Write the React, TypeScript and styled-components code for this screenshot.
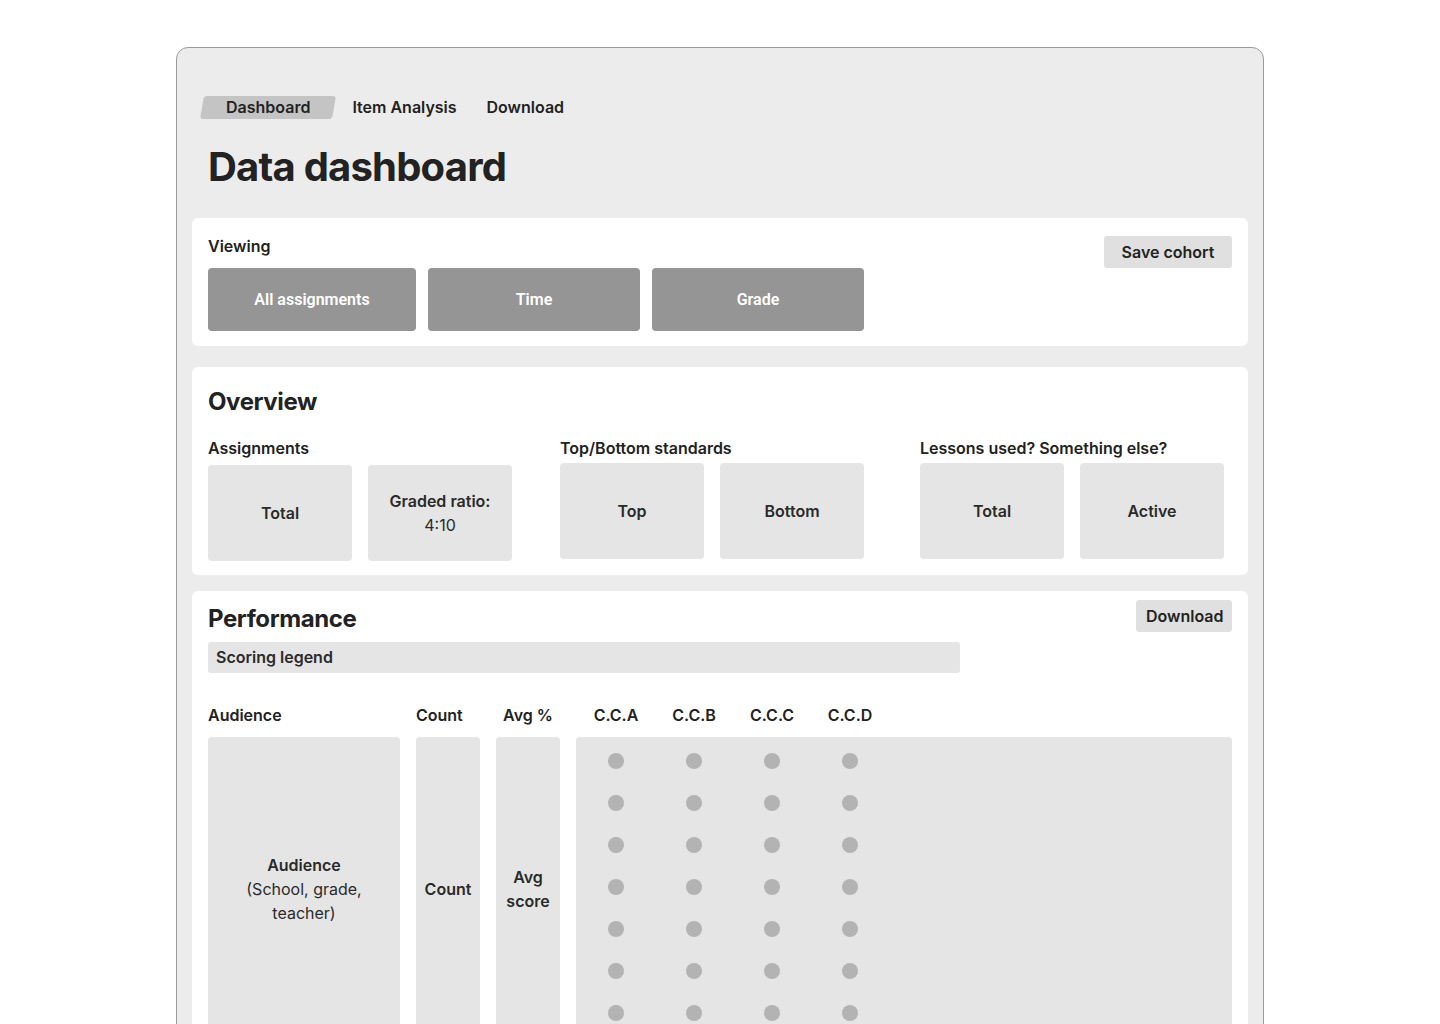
import React from 'react';
import styled, { createGlobalStyle } from 'styled-components';

const GlobalStyle = createGlobalStyle`
  * { box-sizing: border-box; }
  body {
    margin: 0;
    background: #fff;
    font-family: Inter, "Noto Sans", sans-serif;
    color: #222;
  }
`;

const Frame = styled.div`
  width: 1088px;
  margin: 47px auto 0;
  padding: 48px 15px 24px;
  background: #ececec;
  border: 1px solid #9a9a9a;
  border-radius: 12px;
`;

const Tabs = styled.nav`
  display: flex;
  align-items: center;
  gap: 6px;
  padding-left: 10px;
`;

const Tab = styled.div<{ $active?: boolean }>`
  position: relative;
  height: 23px;
  line-height: 23px;
  padding: 0 ${p => (p.$active ? '24px' : '12px')};
  font-size: 16px;
  font-weight: 600;
  color: #222;

  &::before {
    content: '';
    position: absolute;
    inset: 0;
    background: ${p => (p.$active ? '#c4c4c4' : 'transparent')};
    border-radius: 3px;
    transform: skewX(-10deg);
    z-index: 0;
  }

  span {
    position: relative;
  }
`;

const Title = styled.h1`
  margin: 24px 0 27px 16px;
  font-size: 40px;
  line-height: 48px;
  font-weight: 700;
  letter-spacing: -0.8px;
  color: #222;
`;

const Card = styled.section<{ $pad: string }>`
  background: #fff;
  border-radius: 6px;
  padding: ${p => p.$pad};
  & + & {
    margin-top: 16px;
  }
`;

const ViewingCard = styled(Card)`
  display: flex;
  justify-content: space-between;
  align-items: flex-start;
  margin-bottom: 21px;
`;

const Label = styled.div`
  font-size: 16px;
  line-height: 20px;
  font-weight: 600;
  color: #222;
`;

const FilterRow = styled.div`
  display: flex;
  gap: 12px;
  margin-top: 12px;
`;

const FilterButton = styled.button<{ $w: number }>`
  width: ${p => p.$w}px;
  height: 63px;
  border: none;
  border-radius: 4px;
  background: #959595;
  color: #fff;
  font-family: Roboto, "Noto Sans", sans-serif;
  font-size: 16px;
  font-weight: 600;
`;

const GrayButton = styled.button<{ $w?: number }>`
  width: ${p => (p.$w ? `${p.$w}px` : 'auto')};
  height: 32px;
  padding: 0 10px;
  border: none;
  border-radius: 3px;
  background: #e0e0e0;
  color: #222;
  font-family: Inter, sans-serif;
  font-size: 16px;
  font-weight: 600;
`;

const SectionTitle = styled.h2`
  margin: 0;
  font-size: 24px;
  line-height: 30px;
  font-weight: 700;
  letter-spacing: -0.4px;
  color: #222;
`;

const Groups = styled.div`
  display: flex;
  margin-top: 21px;
`;

const Group = styled.div<{ $gap: number }>`
  margin-left: ${p => p.$gap}px;
`;

const StatRow = styled.div<{ $top: number }>`
  display: flex;
  gap: 16px;
  margin-top: ${p => p.$top}px;
`;

const StatBox = styled.div`
  width: 144px;
  height: 96px;
  border-radius: 4px;
  background: #e5e5e5;
  display: flex;
  flex-direction: column;
  align-items: center;
  justify-content: center;
  text-align: center;
  font-size: 16px;
  line-height: 24px;
  font-weight: 600;
  color: #2a2a2a;
`;

const Regular = styled.span`
  font-weight: 400;
`;

const PerfHeader = styled.div`
  display: flex;
  justify-content: space-between;
  align-items: flex-start;

  h2 {
    margin-top: 4px;
  }
`;

const Legend = styled.div`
  width: 752px;
  height: 31px;
  margin-top: 8px;
  padding: 0 8px;
  border-radius: 3px;
  background: #e5e5e5;
  font-size: 16px;
  line-height: 31px;
  font-weight: 600;
  color: #2a2a2a;
`;

const TableHead = styled.div`
  display: flex;
  margin-top: 32px;
  height: 20px;
`;

const HeadCell = styled.div<{ $w: number; $gap?: number; $align?: string }>`
  width: ${p => p.$w}px;
  margin-left: ${p => p.$gap ?? 0}px;
  text-align: ${p => p.$align ?? 'left'};
  font-size: 16px;
  line-height: 20px;
  font-weight: 600;
  color: #222;
  white-space: nowrap;
`;

const StandardHeads = styled.div`
  display: flex;
  margin-left: 16px;
  padding-left: 1px;
`;

const StandardHead = styled.span`
  width: 78px;
  text-align: center;
  font-size: 16px;
  line-height: 20px;
  font-weight: 600;
  color: #222;
`;

const TableBody = styled.div`
  display: flex;
  gap: 16px;
  margin-top: 12px;
`;

const Column = styled.div<{ $w: number }>`
  width: ${p => p.$w}px;
  height: 304px;
  padding: 0 16px;
  border-radius: 4px;
  background: #e5e5e5;
  display: flex;
  flex-direction: column;
  align-items: center;
  justify-content: center;
  text-align: center;
  font-size: 16px;
  line-height: 24px;
  font-weight: 600;
  color: #2a2a2a;
`;

const NarrowColumn = styled(Column)`
  padding: 0;
`;

const DotArea = styled.div`
  flex: 1;
  height: 304px;
  padding: 16px 0 0 1px;
  border-radius: 4px;
  background: #e5e5e5;
  display: grid;
  grid-template-columns: repeat(4, 78px);
  grid-auto-rows: 16px;
  row-gap: 26px;
  justify-items: center;
`;

const Dot = styled.span`
  width: 16px;
  height: 16px;
  border-radius: 50%;
  background: #b3b3b3;
`;

const standards = ['C.C.A', 'C.C.B', 'C.C.C', 'C.C.D'];

export default function App() {
  const dots = Array.from({ length: 7 * standards.length });

  return (
    <>
      <GlobalStyle />
      <Frame>
        <Tabs>
          <Tab $active><span>Dashboard</span></Tab>
          <Tab><span>Item Analysis</span></Tab>
          <Tab><span>Download</span></Tab>
        </Tabs>

        <Title>Data dashboard</Title>

        <ViewingCard $pad="18px 16px 15px">
          <div>
            <Label>Viewing</Label>
            <FilterRow>
              <FilterButton $w={208}>All assignments</FilterButton>
              <FilterButton $w={212}>Time</FilterButton>
              <FilterButton $w={212}>Grade</FilterButton>
            </FilterRow>
          </div>
          <GrayButton $w={128}>Save cohort</GrayButton>
        </ViewingCard>

        <Card $pad="20px 16px 14px">
          <SectionTitle>Overview</SectionTitle>
          <Groups>
            <Group $gap={0}>
              <Label>Assignments</Label>
              <StatRow $top={7}>
                <StatBox>Total</StatBox>
                <StatBox>
                  Graded ratio:
                  <Regular>4:10</Regular>
                </StatBox>
              </StatRow>
            </Group>
            <Group $gap={48}>
              <Label>Top/Bottom standards</Label>
              <StatRow $top={5}>
                <StatBox>Top</StatBox>
                <StatBox>Bottom</StatBox>
              </StatRow>
            </Group>
            <Group $gap={56}>
              <Label>Lessons used? Something else?</Label>
              <StatRow $top={5}>
                <StatBox>Total</StatBox>
                <StatBox>Active</StatBox>
              </StatRow>
            </Group>
          </Groups>
        </Card>

        <Card $pad="9px 16px 16px">
          <PerfHeader>
            <SectionTitle>Performance</SectionTitle>
            <GrayButton $w={96}>Download</GrayButton>
          </PerfHeader>
          <Legend>Scoring legend</Legend>

          <TableHead>
            <HeadCell $w={192}>Audience</HeadCell>
            <HeadCell $w={64} $gap={16}>Count</HeadCell>
            <HeadCell $w={64} $gap={16} $align="center">Avg %</HeadCell>
            <StandardHeads>
              {standards.map(s => (
                <StandardHead key={s}>{s}</StandardHead>
              ))}
            </StandardHeads>
          </TableHead>

          <TableBody>
            <Column $w={192}>
              Audience
              <Regular>(School, grade, teacher)</Regular>
            </Column>
            <NarrowColumn $w={64}>Count</NarrowColumn>
            <NarrowColumn $w={64}>Avg score</NarrowColumn>
            <DotArea>
              {dots.map((_, i) => (
                <Dot key={i} />
              ))}
            </DotArea>
          </TableBody>
        </Card>
      </Frame>
    </>
  );
}
